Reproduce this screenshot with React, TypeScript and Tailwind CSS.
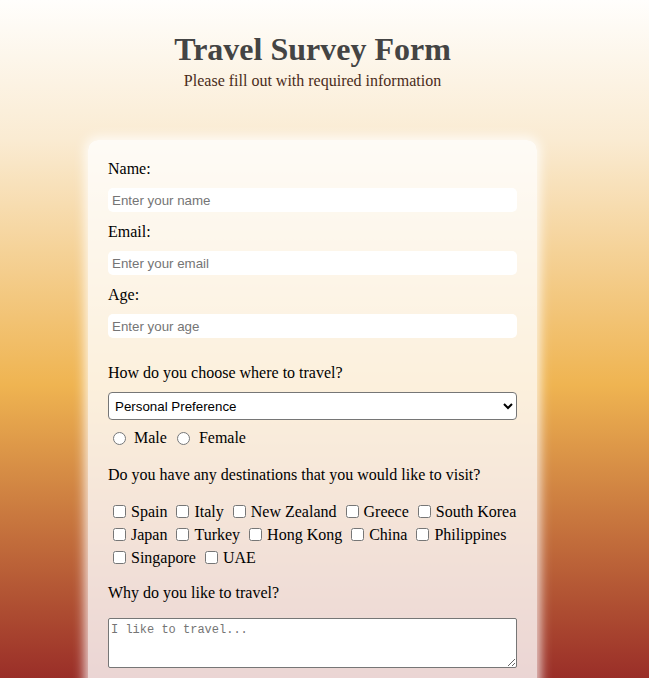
const countryRows = [
  ["Spain", "Italy", "New Zealand", "Greece", "South Korea"],
  ["Japan", "Turkey", "Hong Kong", "China", "Philippines"],
  ["Singapore", "UAE"],
];

const textField = [
  { label: "Name:", placeholder: "Enter your name", type: "text" },
  { label: "Email:", placeholder: "Enter your email", type: "email" },
  { label: "Age:", placeholder: "Enter your age", type: "number" },
];

export default function App() {
  return (
    <div className="min-h-screen bg-[linear-gradient(to_bottom,#fffefc_0px,#faebd2_140px,#efb451_385px,#9a2e28_678px)] font-['Liberation_Serif',serif] text-black">
      <div className="flex w-[625px] flex-col items-center pt-[31px]">
        <h1 className="text-[32px] leading-[36px] font-bold text-[#444]">Travel Survey Form</h1>
        <p className="mt-[5px] text-base leading-[18px] text-[#4a2c1a]">Please fill out with required information</p>

        <form className="mt-[50px] w-[449px] rounded-[10px] bg-white/80 px-5 pt-5 pb-10 shadow-[0_0_12px_3px_rgba(255,255,255,0.85)]">
          {textField.map((f, i) => (
            <div key={f.label} className={i === 0 ? "" : "mt-[11px]"}>
              <label className="block text-base leading-[18px]">{f.label}</label>
              <input
                type={f.type}
                placeholder={f.placeholder}
                className="mt-[10px] block h-[24px] w-full rounded-[5px] bg-white pl-[4px] font-['Liberation_Sans',sans-serif] text-[13.33px] outline-none placeholder:text-[#757575]"
              />
            </div>
          ))}

          <p className="mt-[26px] text-base leading-[18px]">How do you choose where to travel?</p>
          <select className="mt-[10px] block h-[28px] w-full rounded-[4px] border border-[#767676] bg-white pl-[2px] font-['Liberation_Sans',sans-serif] text-[13.33px] text-black">
            <option>Personal Preference</option>
            <option>Recommendations</option>
            <option>Social Media</option>
            <option>Budget</option>
          </select>

          <div className="mt-[9px] flex h-[18px] items-center text-base leading-[18px]">
            <label className="ml-[5px] flex items-center">
              <input type="radio" name="gender" className="h-[13px] w-[13px]" />
              <span className="ml-[8px]">Male</span>
            </label>
            <label className="ml-[10px] flex items-center">
              <input type="radio" name="gender" className="h-[13px] w-[13px]" />
              <span className="ml-[9px]">Female</span>
            </label>
          </div>

          <p className="mt-[19px] text-base leading-[18px]">Do you have any destinations that you would like to visit?</p>
          <div className="mt-[16px]">
            {countryRows.map((row) => (
              <div key={row[0]} className="flex h-[23px] items-center pl-[5px] text-base">
                {row.map((c, i) => (
                  <label key={c} className={`flex items-center ${i === 0 ? "" : "ml-[9px]"}`}>
                    <input type="checkbox" className="h-[13px] w-[13px]" />
                    <span className="ml-[5px] whitespace-nowrap">{c}</span>
                  </label>
                ))}
              </div>
            ))}
          </div>

          <p className="mt-[15px] text-base leading-[18px]">Why do you like to travel?</p>
          <textarea
            placeholder="I like to travel..."
            className="mt-[16px] block h-[50px] w-full rounded-[2px] border border-[#767676] bg-white p-[2px] font-['Liberation_Mono',monospace] text-[12px] placeholder:text-[#757575]"
          />
        </form>
      </div>
    </div>
  );
}
